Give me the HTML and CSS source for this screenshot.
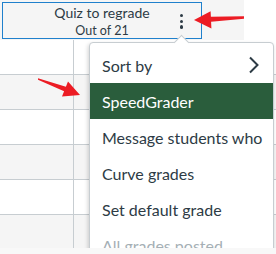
FILE: index.html
```html
<!DOCTYPE html>
<html>
<head>
<meta charset="utf-8">
<link rel="stylesheet" href="styles.css">
</head>
<body>
<div class="viewport">
  <div class="head-row">
    <div class="col-header">
      <div class="col-title">Quiz to regrade</div>
      <div class="col-sub">Out of 21</div>
      <span class="kebab"><i></i><i></i><i></i></span>
    </div>
  </div>
  <div class="rows">
    <div class="row"><div class="cell first"></div><div class="cell"></div></div>
    <div class="row alt"><div class="cell first"></div><div class="cell"></div></div>
    <div class="row"><div class="cell first"></div><div class="cell"></div></div>
    <div class="row alt"><div class="cell first"></div><div class="cell"></div></div>
    <div class="row"><div class="cell first"></div><div class="cell"></div></div>
    <div class="row alt"><div class="cell first"></div><div class="cell"></div></div>
  </div>
  <div class="menu">
    <span class="caret"></span>
    <div class="item">Sort by
      <svg class="chev" width="12" height="18" viewBox="0 0 12 18"><path d="M2 1.5 L9.5 9 L2 16.5" fill="none" stroke="#2d3b45" stroke-width="2"/></svg>
    </div>
    <div class="item active">SpeedGrader</div>
    <div class="item">Message students who</div>
    <div class="item">Curve grades</div>
    <div class="item">Set default grade</div>
    <div class="item disabled">All grades posted</div>
  </div>
  <svg class="arrows" width="276" height="248" viewBox="0 0 276 248">
    <polygon fill="#ec1c24" points="194,20 210.6,11.2 210.9,16.7 244,16.3 244,18.7 211.1,21.7 211.4,28.5"/>
    <polygon fill="#ec1c24" points="38,78.3 65.9,86.7 68,81.6 80,95 62,96.6 64.1,91.3 38,79.7"/>
  </svg>
</div>
<div class="footer"></div>
</body>
</html>
```

FILE: styles.css
```css
html, body {
  margin: 0;
  padding: 0;
  background: #ffffff;
  font-family: Lato, "Liberation Sans", sans-serif;
  color: #2d3b45;
}
.viewport {
  position: relative;
  height: 248px;
  overflow: hidden;
}
.head-row {
  width: 244px;
  height: 40px;
  box-sizing: border-box;
  padding: 2px 0 0 2px;
  background: #f5f5f5;
}
.col-header {
  position: relative;
  width: 200px;
  height: 37px;
  box-sizing: border-box;
  border: 1px solid #1f80cc;
  display: flex;
  flex-direction: column;
  align-items: center;
  padding-top: 1px;
}
.col-title {
  font-size: 14px;
  line-height: 18px;
}
.col-sub {
  font-size: 12.5px;
  line-height: 16px;
  margin-top: 1px;
}
.kebab {
  position: absolute;
  left: 177px;
  top: 11px;
  display: flex;
  flex-direction: column;
  gap: 2.5px;
}
.kebab i {
  display: block;
  width: 3.2px;
  height: 3.2px;
  border-radius: 50%;
  background: #2d3b45;
}
.rows {
  display: flex;
  flex-direction: column;
}
.row {
  display: flex;
  height: 35px;
  box-sizing: border-box;
  border-bottom: 1px solid #c7cdd1;
  background: #ffffff;
}
.row.alt {
  background: #f5f5f5;
}
.cell {
  flex: 1;
}
.cell.first {
  flex: none;
  width: 74px;
  box-sizing: border-box;
  border-right: 1px solid #c7cdd1;
}
.menu {
  position: absolute;
  left: 89px;
  top: 42px;
  width: 185px;
  box-sizing: border-box;
  background: #ffffff;
  border: 1px solid #c7cdd1;
  border-radius: 4px;
  box-shadow: -1px 2px 4px rgba(0, 0, 0, 0.18);
  padding-top: 4px;
}
.caret {
  position: absolute;
  left: 86px;
  top: -6px;
  width: 10px;
  height: 10px;
  background: #ffffff;
  border-left: 1px solid #c7cdd1;
  border-top: 1px solid #c7cdd1;
  transform: rotate(45deg);
}
.item {
  position: relative;
  height: 36px;
  display: flex;
  align-items: center;
  padding-left: 12px;
  font-size: 16px;
  white-space: nowrap;
}
.item.active {
  background: #2a5d3c;
  color: #ffffff;
}
.item.disabled {
  color: #a5afb5;
}
.chev {
  position: absolute;
  left: 158px;
  top: 9px;
}
.arrows {
  position: absolute;
  left: 0;
  top: 0;
  pointer-events: none;
}
.footer {
  height: 6px;
  background: #f8f8f8;
}
```
